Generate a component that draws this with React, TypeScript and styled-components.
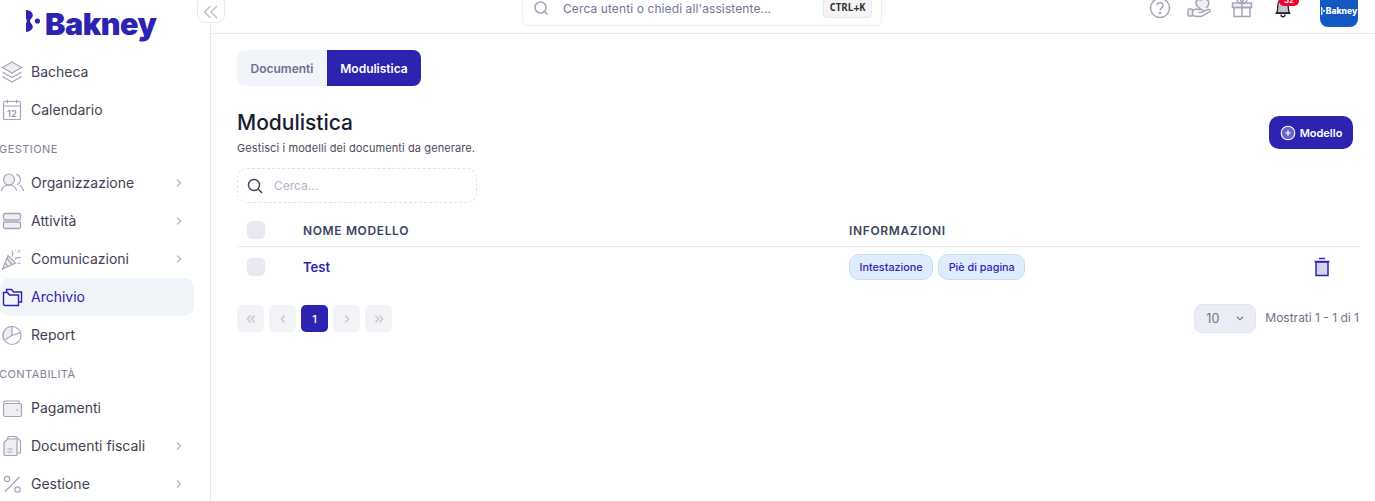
import React from 'react';
import styled, { createGlobalStyle } from 'styled-components';

const Global = createGlobalStyle`
  html, body { margin: 0; padding: 0; background: #fff; }
  body { font-family: Inter, "Noto Sans", sans-serif; overflow: hidden; }
  * { box-sizing: border-box; }
`;

const Shell = styled.div`
  display: flex;
  width: 1375px;
  height: 501px;
  overflow: hidden;
  position: relative;
`;

const Sidebar = styled.aside`
  width: 211px;
  flex: none;
  height: 501px;
  border-right: 1px solid #e9e9f2;
  overflow: hidden;
`;

const LogoRow = styled.div`
  display: flex;
  align-items: flex-start;
  height: 53px;
  padding: 9px 0 0 26px;
  gap: 5px;
`;

const LogoText = styled.span`
  font-size: 30.5px;
  font-weight: 900;
  letter-spacing: -0.45px;
  color: #2c24b0;
  line-height: 30px;
`;

const Nav = styled.nav`
  display: flex;
  flex-direction: column;
`;

const Item = styled.div<{ $active?: boolean }>`
  display: flex;
  align-items: center;
  height: 38px;
  width: 194px;
  padding-left: 1px;
  padding-right: 11px;
  border-radius: 10px;
  font-size: 14px;
  font-weight: 400;
  color: ${p => (p.$active ? '#2c24b0' : '#3f4254')};
  background: ${p => (p.$active ? '#f1f4f8' : 'transparent')};
`;

const IconSlot = styled.span`
  width: 30px;
  height: 24px;
  flex: none;
  display: flex;
  align-items: center;
`;

const Label = styled.span`
  flex: 1;
  margin-bottom: 2px;
`;

const Section = styled.div`
  font-size: 11px;
  letter-spacing: 0.45px;
  color: #7e8299;
  height: 35px;
  padding-top: 13px;
  line-height: 14px;
  margin-left: -1px;
`;

const Collapse = styled.button`
  position: absolute;
  left: 197px;
  top: -6px;
  width: 28px;
  height: 29px;
  padding: 6px 0 0;
  background: #fff;
  border: 1px solid #e9e9f2;
  border-radius: 8px;
  display: flex;
  align-items: center;
  justify-content: center;
`;

const Main = styled.div`
  flex: 1;
  min-width: 0;
  display: flex;
  flex-direction: column;
`;

const Header = styled.header`
  height: 34px;
  flex: none;
  border-bottom: 1px solid #ececf0;
  display: flex;
  align-items: flex-start;
  position: relative;
  overflow: hidden;
`;

const SearchBar = styled.div`
  width: 360px;
  height: 36px;
  margin: -10px 0 0 311px;
  border: 1px solid #eeeef2;
  border-radius: 6px;
  display: flex;
  align-items: center;
  padding: 0 9px 0 10px;
  font-size: 12px;
  color: #737692;
`;

const SearchText = styled.span`
  margin-left: 14px;
  flex: 1;
  letter-spacing: 0.1px;
`;

const Kbd = styled.span`
  width: 49px;
  height: 20px;
  margin-top: -1px;
  background: #f4f4f5;
  border: 1px solid #e9e9ec;
  border-radius: 4px;
  display: flex;
  align-items: center;
  justify-content: center;
  font-family: "DejaVu Sans Mono", "Liberation Mono", monospace;
  font-weight: 700;
  font-size: 10px;
  color: #333;
`;

const Tools = styled.div`
  display: flex;
  align-items: flex-start;
  margin-left: auto;
  margin-right: 17px;
`;

const ToolIcon = styled.span<{ $w: number }>`
  width: ${p => p.$w}px;
  flex: none;
  display: flex;
  justify-content: center;
  margin-top: -3px;
`;

const BellWrap = styled.span`
  position: relative;
  width: 34px;
  display: flex;
  justify-content: center;
  margin-top: -3px;
`;

const Badge = styled.span`
  position: absolute;
  left: 13px;
  top: -2px;
  width: 20px;
  height: 11px;
  border-radius: 5px;
  background: #f1002b;
  color: #fff;
  font-size: 8px;
  font-weight: 600;
  line-height: 11px;
  text-align: center;
`;

const Avatar = styled.div`
  width: 38px;
  height: 37px;
  margin: -10px 0 0 20px;
  background: #1259c3;
  border-radius: 8px;
  color: #fff;
  font-size: 8.5px;
  font-weight: 800;
  display: flex;
  align-items: center;
  justify-content: center;
  padding-top: 5px;
  gap: 1px;
`;

const Content = styled.main`
  padding: 16px 16px 0 26px;
`;

const Tabs = styled.div`
  display: flex;
  width: 184px;
  height: 36px;
  background: #f1f4f8;
  border-radius: 8px;
`;

const Tab = styled.div<{ $active?: boolean }>`
  height: 36px;
  width: ${p => (p.$active ? 94 : 90)}px;
  display: flex;
  align-items: center;
  justify-content: center;
  font-size: 12px;
  font-weight: 600;
  color: ${p => (p.$active ? '#fff' : '#6d7090')};
  background: ${p => (p.$active ? '#2c24b0' : 'transparent')};
  border-radius: ${p => (p.$active ? '0 8px 8px 0' : '8px 0 0 8px')};
`;

const TitleRow = styled.div`
  display: flex;
  justify-content: space-between;
  align-items: flex-start;
  margin-top: 24px;
  padding-right: 6px;
`;

const Title = styled.h1`
  margin: 0;
  font-size: 21px;
  line-height: 26px;
  font-weight: 500;
  color: #181c32;
`;

const Sub = styled.p`
  margin: 5px 0 0;
  font-size: 11px;
  line-height: 14px;
  letter-spacing: 0.1px;
  color: #4b4d5e;
`;

const AddButton = styled.button`
  margin-top: 6px;
  width: 84px;
  height: 33px;
  border: 0;
  border-radius: 10px;
  background: #2c24b0;
  color: #fff;
  font: 600 11px Inter, sans-serif;
  display: flex;
  align-items: center;
  justify-content: center;
  gap: 4px;
`;

const SearchBox = styled.div`
  margin-top: 13px;
  width: 240px;
  height: 35px;
  border: 1px dashed #e1e1ea;
  border-radius: 10px;
  display: flex;
  align-items: center;
  padding-left: 9px;
  gap: 11px;
  font-size: 12px;
  color: #b1b3c4;
`;

const Row = styled.div<{ $head?: boolean }>`
  display: grid;
  grid-template-columns: 56px 546px 1fr 48px;
  align-items: center;
  height: ${p => (p.$head ? 33 : 40)}px;
  border-bottom: ${p => (p.$head ? '1px solid #e6e8f3' : '0')};
  padding-left: 10px;
  ${p => p.$head && 'margin-top: 11px;'}
`;

const Check = styled.span`
  width: 18px;
  height: 18px;
  border-radius: 5px;
  background: #e6e9f2;
  display: block;
`;

const HeadCell = styled.span`
  font-size: 12px;
  font-weight: 600;
  letter-spacing: 0.64px;
  color: #3a4560;
`;

const Name = styled.span`
  font-size: 13px;
  font-weight: 600;
  color: #2c24b0;
`;

const Chips = styled.div`
  display: flex;
  gap: 5px;
`;

const Chip = styled.span`
  height: 26px;
  padding: 0 9.5px;
  border-radius: 10px;
  background: #deecfd;
  border: 1px solid #c7ddf6;
  color: #3027b5;
  font-size: 10.8px;
  font-weight: 500;
  display: flex;
  align-items: center;
`;

const TrashCell = styled.span`
  display: flex;
  padding-left: 2px;
`;

const Footer = styled.div`
  display: flex;
  align-items: center;
  justify-content: space-between;
  margin-top: 17px;
`;

const Pager = styled.div`
  display: flex;
  gap: 5px;
`;

const PageBtn = styled.span<{ $active?: boolean }>`
  width: 27px;
  height: 27px;
  border-radius: 5px;
  background: ${p => (p.$active ? '#2c24b0' : '#f1f3f7')};
  color: #fff;
  font-size: 11px;
  font-weight: 500;
  display: flex;
  align-items: center;
  justify-content: center;
`;

const PerPage = styled.div`
  display: flex;
  align-items: center;
  gap: 9px;
  font-size: 12px;
  color: #6f7287;
`;

const Showing = styled.span`
  margin-bottom: 2px;
`;

const Select = styled.div`
  width: 62px;
  height: 29px;
  background: #eaeef4;
  border: 1px solid #e2e6ef;
  border-radius: 8px;
  display: flex;
  align-items: center;
  justify-content: space-between;
  padding: 0 11px 0 11px;
  color: #6f7287;
  font-size: 12.5px;
`;

const G = '#a6a5b8';
const L = '#eeeef3';

const Chevron = () => (
  <svg width="8" height="10" viewBox="0 0 8 10" fill="none"><path d="M2 1.5 5.600 5 2 8.500" stroke="#aeb0c0" strokeWidth="1.100" /></svg>
);

const PageIcon = ({ d }: { d: string }) => (
  <svg width="10" height="10" viewBox="0 0 10 10" fill="none" stroke="#c6c8d3" strokeWidth="1.500"><path d={d} /></svg>
);

const icons: Record<string, React.ReactNode> = {
  layers: (
    <svg width="22" height="24" viewBox="0 0 22 24" fill="none" stroke={G} strokeWidth="1.200">
      <path d="M11 2 20.500 7.500 11 13 1.500 7.500Z" fill={L} />
      <path d="M1.500 12 11 17.500 20.500 12M1.500 16.500 11 22 20.500 16.500" />
    </svg>
  ),
  calendar: (
    <svg width="22" height="24" viewBox="0 0 22 24" fill="none" stroke={G} strokeWidth="1.200">
      <rect x="2.500" y="3.500" width="17" height="18" rx="1" />
      <path d="M2.500 8h17M6.500 1.800v3.500M15.500 1.800v3.500" />
      <text x="11" y="19" textAnchor="middle" fontSize="9.500" fontWeight="500" fontFamily="Inter" stroke="none" fill="#8f8ea4">12</text>
    </svg>
  ),
  users: (
    <svg width="24" height="24" viewBox="0 0 24 24" fill="none" stroke={G} strokeWidth="1.200">
      <circle cx="8" cy="8.500" r="5.500" fill={L} />
      <path d="M.5 20c.5-4 3-6 7.500-6s7 2 7.500 6" />
      <path d="M15 3.300a5.500 5.500 0 0 1 1 10.400M19 14.500c2 1 3 3 3.500 5.500" />
    </svg>
  ),
  stack: (
    <svg width="22" height="24" viewBox="0 0 22 24" fill="none" stroke={G} strokeWidth="1.300">
      <rect x="2.500" y="4.500" width="17" height="6.500" rx="1.500" fill={L} />
      <rect x="2.500" y="13" width="17" height="6.500" rx="1.500" fill={L} />
    </svg>
  ),
  party: (
    <svg width="24" height="24" viewBox="0 0 24 24" fill="none" stroke={G} strokeWidth="1.200">
      <path d="M1.500 22 7 8.500 14.500 16Z" fill={L} />
      <path d="M4 16l3.500 4M6 11.500l5.500 6.500" />
      <path d="M11 9.500c1-2 1-4 0-6M14 12c1.500-1.500 3.500-2 6-1.500M17 5.500l2-2.500M16.500 16l3 .5M14 3l.5.5" />
    </svg>
  ),
  folder: (
    <svg width="22" height="24" viewBox="0 0 22 24" fill="none" stroke="#2c24b0" strokeWidth="1.400">
      <path d="M2.500 7.500h4l2 2.500h9v10.500H4a1.500 1.500 0 0 1-1.500-1.500Z" />
      <path d="M5.500 7V4.500h5l2 2.500h8v10h-3" />
    </svg>
  ),
  pie: (
    <svg width="22" height="24" viewBox="0 0 22 24" fill="none" stroke={G} strokeWidth="1.200">
      <circle cx="11" cy="12.500" r="9" />
      <path d="M11 12.500 3.200 17A9 9 0 0 1 11 3.500Z" fill={L} />
      <path d="M11 12.500 19.500 9.500" />
    </svg>
  ),
  wallet: (
    <svg width="22" height="24" viewBox="0 0 22 24" fill="none" stroke={G} strokeWidth="1.200">
      <path d="M2.500 7a2 2 0 0 1 2-2H18v3" />
      <rect x="2.500" y="7.500" width="18" height="13" rx="1.500" fill={L} />
      <path d="M15.500 14h1.500" strokeWidth="1.600" />
    </svg>
  ),
  docs: (
    <svg width="22" height="24" viewBox="0 0 22 24" fill="none" stroke={G} strokeWidth="1.200">
      <path d="M7 5V2.500h8l4.500 4.500v12H16" />
      <path d="M3 8.500 6.500 5H13a2 2 0 0 1 3 2v13.500a1 1 0 0 1-1 1H4a1 1 0 0 1-1-1Z" fill={L} />
      <path d="M6.500 15h5M6.500 18h5" />
    </svg>
  ),
  percent: (
    <svg width="22" height="24" viewBox="0 0 22 24" fill="none" stroke={G} strokeWidth="1.200">
      <path d="M18.500 5 4 19.500" />
      <circle cx="6" cy="7" r="2.700" />
      <circle cx="16.500" cy="17.500" r="2.700" />
    </svg>
  ),
};

type NavEntry = { label: string; icon: string; more?: boolean; active?: boolean };

const NavItem = ({ label, icon, more, active }: NavEntry) => (
  <Item $active={active}>
    <IconSlot>{icons[icon]}</IconSlot>
    <Label>{label}</Label>
    {more && <Chevron />}
  </Item>
);

const Logo = () => (
  <svg width="14" height="24" viewBox="0 0 14 24" fill="#2c24b0">
    <path d="M0 1c3.600 0 6.800 2.300 6.800 5.400 0 2.400-2.800 3.400-2.800 5.600s2.800 3.200 2.800 5.600C6.800 20.700 3.600 23 0 23v-8.500c1-.8 1-4.200 0-5Z" />
    <circle cx="11.400" cy="12" r="2.600" />
  </svg>
);

export default function App() {
  return (
    <Shell>
      <Global />
      <Sidebar>
        <LogoRow><Logo /><LogoText>Bakney</LogoText></LogoRow>
        <Nav>
          <NavItem label="Bacheca" icon="layers" />
          <NavItem label="Calendario" icon="calendar" />
          <Section>GESTIONE</Section>
          <NavItem label="Organizzazione" icon="users" more />
          <NavItem label="Attività" icon="stack" more />
          <NavItem label="Comunicazioni" icon="party" more />
          <NavItem label="Archivio" icon="folder" active />
          <NavItem label="Report" icon="pie" />
          <Section>CONTABILITÀ</Section>
          <NavItem label="Pagamenti" icon="wallet" />
          <NavItem label="Documenti fiscali" icon="docs" more />
          <NavItem label="Gestione" icon="percent" more />
        </Nav>
      </Sidebar>
      <Collapse aria-label="Comprimi">
        <svg width="16" height="16" viewBox="0 0 16 16" fill="none" stroke="#bcbccd" strokeWidth="1.400">
          <path d="M7.500 2 1.500 8l6 6M14 2 8 8l6 6" />
        </svg>
      </Collapse>
      <Main>
        <Header>
          <SearchBar>
            <svg width="16" height="16" viewBox="0 0 16 16" fill="none" stroke="#a9abbc" strokeWidth="1.700">
              <circle cx="7.500" cy="7.500" r="5.500" /><path d="m11.500 11.500 3 3" />
            </svg>
            <SearchText>Cerca utenti o chiedi all'assistente...</SearchText>
            <Kbd>CTRL+K</Kbd>
          </SearchBar>
          <Tools>
            <ToolIcon $w={44}>
              <svg width="22" height="22" viewBox="0 0 22 22" fill="none" stroke={G} strokeWidth="1.500">
                <circle cx="11" cy="11" r="9.500" />
                <path d="M8 8.500a3 3 0 1 1 4.500 2.600c-1 .6-1.500 1.200-1.500 2.400" />
                <circle cx="11" cy="16" r=".6" />
              </svg>
            </ToolIcon>
            <ToolIcon $w={36}>
              <svg width="26" height="22" viewBox="0 0 26 22" fill="none" stroke={G} strokeWidth="1.500">
                <path d="M14 12.500c-3-2-5-4-5-7a3.300 3.300 0 0 1 5-2.500 3.300 3.300 0 0 1 6 0c3 1 2 6-1 8" fill={L} />
                <rect x="1" y="12" width="4.500" height="7" rx="1" fill={L} />
                <path d="M5.500 14c2-2 4-2.500 6-1.500h3a1.500 1.500 0 0 1 0 3h-3M15 15l6-2.500c2-.5 3 1 1.500 2.500L15 19c-3 1-6 .5-9.500-.5" />
              </svg>
            </ToolIcon>
            <ToolIcon $w={48}>
              <svg width="22" height="22" viewBox="0 0 22 22" fill="none" stroke={G} strokeWidth="1.500">
                <rect x="1.500" y="6" width="19" height="4.500" fill={L} />
                <rect x="3" y="10.500" width="16" height="9" />
                <path d="M11 6v13.500M11 6C8 6 6 4.500 6 3s3-2.500 5 3c2-5.500 5-4.500 5-3s-2 3-5 3Z" />
              </svg>
            </ToolIcon>
            <BellWrap>
              <svg width="20" height="22" viewBox="0 0 20 22" fill="none" stroke="#22232c" strokeWidth="1.300">
                <path d="M3.500 16c1.500-2 1-4 1.300-7.500C5.100 4.500 7 2 10 2s4.900 2.500 5.200 6.500C15.500 12 15 14 16.500 16Z" fill="#c4c4cc" />
                <path d="M2.800 16.300h14.400M8 17.500c0 3 4 3 4 0" />
              </svg>
              <Badge>32</Badge>
            </BellWrap>
            <Avatar>
              <svg width="4" height="8" viewBox="0 0 4 8" fill="#fff"><path d="M0 0c2 0 2 2.500 1 4 1 1.500 1 4-1 4V5.500c.3-.5.300-2.500 0-3Z" /><circle cx="3" cy="4" r="1" /></svg>
              Bakney
            </Avatar>
          </Tools>
        </Header>
        <Content>
          <Tabs>
            <Tab>Documenti</Tab>
            <Tab $active>Modulistica</Tab>
          </Tabs>
          <TitleRow>
            <div>
              <Title>Modulistica</Title>
              <Sub>Gestisci i modelli dei documenti da generare.</Sub>
            </div>
            <AddButton>
              <svg width="16" height="16" viewBox="0 0 16 16" fill="none" stroke="#fff">
                <circle cx="8" cy="8" r="6.800" strokeWidth="1.100" fill="#6a64c9" />
                <path d="M8 5.200v5.600M5.200 8h5.600" strokeWidth="1.200" />
              </svg>
              Modello
            </AddButton>
          </TitleRow>
          <SearchBox>
            <svg width="16" height="16" viewBox="0 0 16 16" fill="none" stroke="#3f4254" strokeWidth="1.400">
              <circle cx="7" cy="7" r="5.500" /><path d="m11 11 4 4" />
            </svg>
            Cerca...
          </SearchBox>
          <Row $head>
            <Check />
            <HeadCell>NOME MODELLO</HeadCell>
            <HeadCell>INFORMAZIONI</HeadCell>
            <span />
          </Row>
          <Row>
            <Check />
            <Name>Test</Name>
            <Chips>
              <Chip>Intestazione</Chip>
              <Chip>Piè di pagina</Chip>
            </Chips>
            <TrashCell>
              <svg width="18" height="20" viewBox="0 0 18 20" fill="none" stroke="#2c24b0" strokeWidth="1.500">
                <path d="M3 5h12v13.500H3Z" fill="#d3d2ef" />
                <path d="M1.500 4.500h15M6 1.500h6" />
              </svg>
            </TrashCell>
          </Row>
          <Footer>
            <Pager>
              <PageBtn aria-label="Prima"><PageIcon d="M4.500 1.500 1.500 5l3 3.500M8.500 1.500 5.500 5l3 3.500" /></PageBtn>
              <PageBtn aria-label="Precedente"><PageIcon d="M6.500 1.500 3.500 5l3 3.500" /></PageBtn>
              <PageBtn $active>1</PageBtn>
              <PageBtn aria-label="Successiva"><PageIcon d="M3.500 1.500 6.500 5l-3 3.500" /></PageBtn>
              <PageBtn aria-label="Ultima"><PageIcon d="M1.500 1.500 4.500 5l-3 3.500M5.500 1.500 8.500 5l-3 3.500" /></PageBtn>
            </Pager>
            <PerPage>
              <Select>
                10
                <svg width="8" height="5" viewBox="0 0 8 5" fill="none" stroke="#6f7287" strokeWidth="1.100"><path d="m1 1 3 2.800L7 1" /></svg>
              </Select>
              <Showing>Mostrati 1 - 1 di 1</Showing>
            </PerPage>
          </Footer>
        </Content>
      </Main>
    </Shell>
  );
}
